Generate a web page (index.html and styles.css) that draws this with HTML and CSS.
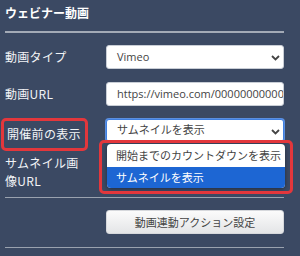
FILE: index.html
```html
<!DOCTYPE html>
<html lang="ja">
<head>
  <meta charset="UTF-8" />
  <meta name="viewport" content="width=device-width, initial-scale=1.0"/>
  <title>ウェビナー動画</title>
  <link rel="stylesheet" href="styles.css">
</head>
<body>
  <div class="panel">
    <h2 class="title">ウェビナー動画</h2>

    <div class="row">
      <label class="label">動画タイプ</label>
      <div class="field">
        <div class="select">Vimeo</div>
        <svg class="chevron" width="9" height="6" viewBox="0 0 9 6"><path d="M1 1l3.5 3.5L8 1" fill="none" stroke="#444" stroke-width="1.8"/></svg>
      </div>
    </div>

    <div class="row">
      <label class="label">動画URL</label>
      <div class="field">
        <div class="input">https://vimeo.com/00000000000000</div>
      </div>
    </div>

    <div class="row row-open">
      <label class="label mark">開催前の表示</label>
      <div class="field">
        <div class="select focused">サムネイルを表示</div>
        <svg class="chevron" width="9" height="6" viewBox="0 0 9 6"><path d="M1 1l3.5 3.5L8 1" fill="none" stroke="#444" stroke-width="1.8"/></svg>
        <ul class="options">
          <li>開始までのカウントダウンを表示</li>
          <li class="selected">サムネイルを表示</li>
        </ul>
      </div>
    </div>

    <div class="row row-top">
      <label class="label">サムネイル画<br>像URL</label>
      <div class="field"></div>
    </div>

    <hr class="divider">

    <div class="row row-button">
      <div class="label"></div>
      <button class="action">動画連動アクション設定</button>
    </div>

    <hr class="divider divider-end">
  </div>
</body>
</html>
```

FILE: styles.css
```css
* {
  margin: 0;
  padding: 0;
  box-sizing: border-box;
}

body {
  background: #3b4963;
  font-family: "Noto Sans CJK JP", "Open Sans", sans-serif;
  color: #ffffff;
  overflow: hidden;
}

.panel {
  width: 284px;
  padding-left: 5px;
}

.title {
  font-size: 12px;
  font-weight: bold;
  line-height: 18px;
  padding-top: 4px;
  padding-bottom: 9px;
  border-bottom: 2px solid #a3aab6;
}

.row {
  display: grid;
  grid-template-columns: 101px minmax(0, 1fr);
  align-items: center;
  margin-top: 12px;
}

.row + .row {
  margin-top: 13px;
}

.row-open {
  margin-top: 12px !important;
}

.row-top {
  align-items: start;
  margin-top: 11px !important;
}

.label {
  font-size: 12px;
  line-height: 18px;
  letter-spacing: 0.3px;
  color: #f2f4f7;
}

.mark {
  position: relative;
  margin-left: 2px;
  padding-top: 7px;
}

.mark::after {
  content: '';
  position: absolute;
  left: -6px;
  right: 18px;
  top: 0;
  bottom: -8px;
  border: 3px solid #e3373c;
  border-radius: 5px;
}

.field {
  position: relative;
  min-width: 0;
}

.select,
.input {
  height: 24px;
  background: #ffffff;
  border: 1px solid #c9ced6;
  border-radius: 3px;
  color: #444444;
  font-family: "Open Sans", "Noto Sans CJK JP", sans-serif;
  font-size: 11px;
  line-height: 22px;
  padding-left: 10px;
  white-space: nowrap;
  overflow: hidden;
}

.focused {
  height: 23px;
  border: 1px solid #3f7fe0;
  box-shadow: 0 0 0 1px #5b8fe0;
  line-height: 20px;
}

.chevron {
  position: absolute;
  right: 4px;
  top: 10px;
}

.options {
  list-style: none;
  position: absolute;
  top: 25px;
  left: 1px;
  right: -1px;
  background: #ffffff;
  border-radius: 4px;
  box-shadow: 0 1px 4px rgba(0,0,0,0.4);
  font-size: 11px;
}

.options::after {
  content: '';
  position: absolute;
  left: -8px;
  right: -8px;
  top: -4px;
  bottom: -6px;
  border: 3px solid #e3373c;
  border-radius: 5px;
}

.options li {
  height: 23px;
  line-height: 23px;
  padding-left: 9px;
  color: #444444;
  white-space: nowrap;
}

.options li.selected {
  height: 21px;
  line-height: 20px;
  background: #1d66d3;
  color: #ffffff;
  border-radius: 0 0 4px 4px;
}

.divider {
  border: none;
  border-top: 1px solid #9aa2af;
  margin-top: 7px;
}

.row-button {
  margin-top: 12px !important;
}

.divider-end {
  margin-top: 13px;
}

.action {
  height: 24px;
  background: linear-gradient(#fbfbfb, #e4e5e7);
  border: 1px solid #d6d8dc;
  border-radius: 3px;
  color: #444444;
  font-family: "Noto Sans CJK JP", sans-serif;
  font-size: 11px;
}
```
